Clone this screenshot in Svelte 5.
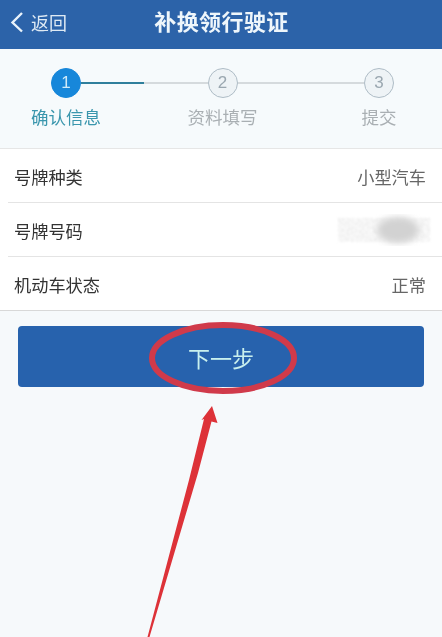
<script>
  const steps = [
    { n: 1, label: '确认信息', active: true },
    { n: 2, label: '资料填写', active: false },
    { n: 3, label: '提交', active: false }
  ];
  const rows = [
    { k: '号牌种类', v: '小型汽车' },
    { k: '号牌号码', v: '' },
    { k: '机动车状态', v: '正常' }
  ];
</script>

<div class="page">
  <header class="top">
    <div class="back">
      <svg class="chev" width="16" height="24" viewBox="0 0 16 24"><path d="M13 3 L3.5 12.5 L13 21.5" fill="none" stroke="#e9f3fb" stroke-width="2.4"/></svg>
      <span>返回</span>
    </div>
    <h1>补换领行驶证</h1>
  </header>

  <section class="steps">
    <div class="track">
      <div class="dot on">1</div>
      <div class="line"><div class="done"></div></div>
      <div class="dot">2</div>
      <div class="line"></div>
      <div class="dot">3</div>
    </div>
    <div class="labels">
      {#each steps as s}
        <span class:on={s.active}>{s.label}</span>
      {/each}
    </div>
  </section>

  <section class="list">
    {#each rows as r}
      <div class="row">
        <span class="key">{r.k}</span>
        {#if r.v}
          <span class="val">{r.v}</span>
        {:else}
          <svg class="smudge" width="96" height="44" viewBox="0 0 96 44">
            <defs>
              <filter id="grain" x="0" y="0" width="100%" height="100%">
                <feTurbulence type="fractalNoise" baseFrequency="0.7" numOctaves="2" seed="4"/>
                <feColorMatrix values="0 0 0 0 0.78  0 0 0 0 0.78  0 0 0 0 0.78  2.6 0 0 0 -0.95"/>
              </filter>
              <filter id="soft"><feGaussianBlur stdDeviation="3.5"/></filter>
              <filter id="soft2"><feGaussianBlur stdDeviation="0.9"/></filter>
            </defs>
            <g filter="url(#soft2)"><rect x="2" y="10" width="92" height="24" filter="url(#grain)"/></g>
            <ellipse cx="62" cy="22" rx="21" ry="13" fill="#d2d2d2" filter="url(#soft)"/>
          </svg>
        {/if}
      </div>
    {/each}
  </section>

  <div class="action">
    <button>下一步</button>
    <svg class="mark" width="442" height="321" viewBox="0 316 442 321">
      <ellipse cx="223" cy="358" rx="71" ry="33" fill="none" stroke="#d03a4a" stroke-width="6"/>
      <path d="M212 406 L217.5 423 L211.5 421.5 L198 473 L149.5 637 L147.5 637 L189 480 L204 419 L201.5 420 Z" fill="#dd3238"/>
    </svg>
  </div>
</div>

<style>
  :global(body) { margin: 0; }
  .page {
    width: 442px;
    height: 637px;
    overflow: hidden;
    background: #f6f9fb;
    font-family: "Liberation Sans", "Noto Sans CJK SC", sans-serif;
    filter: blur(0.45px);
  }
  .top {
    height: 49px;
    background: #2c63a9;
    display: flex;
    align-items: center;
    justify-content: center;
    position: relative;
    color: #eef6fb;
  }
  .top h1 {
    margin: 0 0 4px 1px;
    font-size: 22px;
    font-weight: 700;
    line-height: 1;
    letter-spacing: 0.4px;
  }
  .back {
    position: absolute;
    left: 9px;
    top: 9px;
    display: flex;
    align-items: center;
    gap: 6px;
    font-size: 18px;
    color: #dfeaf4;
  }
  .steps {
    height: 100px;
    box-sizing: border-box;
    padding-top: 19px;
    background: #f6fafc;
    border-bottom: 1px solid #e6e6e6;
  }
  .track {
    display: flex;
    align-items: center;
    padding: 0 48px 0 51px;
  }
  .dot {
    width: 28px;
    height: 28px;
    flex: none;
    box-sizing: content-box;
    border: 1px solid #aebcc6;
    border-radius: 50%;
    display: flex;
    align-items: center;
    justify-content: center;
    font-size: 17px;
    color: #9aa7b0;
    background: #eef3f6;
  }
  .dot.on {
    background: #1787da;
    border-color: #1787da;
    color: #cfeaf8;
  }
  .line {
    flex: 1;
    height: 2px;
    background: #d5dadd;
  }
  .done {
    width: 50%;
    height: 2px;
    background: #2f7f9c;
  }
  .labels {
    display: flex;
    justify-content: space-between;
    padding: 0 13px 0 16px;
    margin-top: 8px;
  }
  .labels span {
    width: 100px;
    text-align: center;
    font-size: 17.5px;
    line-height: 24px;
    color: #a9afb3;
  }
  .labels span.on { color: #3a96ad; }
  .list {
    background: #ffffff;
    border-bottom: 1px solid #d8d8d8;
  }
  .row {
    height: 53px;
    box-sizing: content-box;
    margin-left: 8px;
    padding: 0 16px 0 6px;
    display: flex;
    align-items: center;
    justify-content: space-between;
    border-bottom: 1px solid #e4e4e4;
    font-size: 17.2px;
    color: #333;
  }
  .key, .val { padding-top: 2px; }
  .row:last-child { border-bottom: none; margin-left: 0; padding-left: 14px; }
  .val { color: #666; }
  .smudge { margin-right: -6px; }
  .action {
    position: relative;
    padding: 15px 18px 0;
  }
  button {
    display: block;
    width: 100%;
    height: 61px;
    border: none;
    border-radius: 4px;
    background: #2762ad;
    color: #c9f0ee;
    font-family: inherit;
    font-size: 22px;
  }
  .mark {
    position: absolute;
    left: 0;
    top: 5px;
    pointer-events: none;
  }
</style>
